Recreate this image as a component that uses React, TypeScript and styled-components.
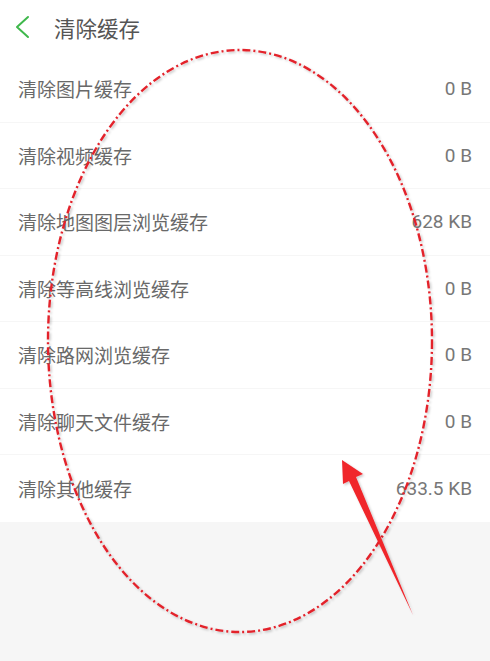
import React from 'react';
import styled, { createGlobalStyle } from 'styled-components';

const GlobalStyle = createGlobalStyle`
  html, body {
    margin: 0;
    padding: 0;
    background: #f6f6f6;
  }
  body {
    font-family: Roboto, "Noto Sans CJK SC", "Noto Sans", sans-serif;
  }
`;

interface CacheItem {
  label: string;
  size: string;
}

const items: CacheItem[] = [
  { label: '清除图片缓存', size: '0 B' },
  { label: '清除视频缓存', size: '0 B' },
  { label: '清除地图图层浏览缓存', size: '628 KB' },
  { label: '清除等高线浏览缓存', size: '0 B' },
  { label: '清除路网浏览缓存', size: '0 B' },
  { label: '清除聊天文件缓存', size: '0 B' },
  { label: '清除其他缓存', size: '633.5 KB' },
];

const App: React.FC = () => {
  return (
    <Page>
      <GlobalStyle />
      <Header>
        <BackButton aria-label="back">
          <svg width="18" height="28" viewBox="0 0 18 28">
            <polyline
              points="15,4 4,14 15,24"
              fill="none"
              stroke="#3fb84c"
              strokeWidth="2"
              strokeLinecap="round"
              strokeLinejoin="round"
            />
          </svg>
        </BackButton>
        <Title>清除缓存</Title>
      </Header>
      <List>
        {items.map((item, i) => (
          <Row key={item.label} $last={i === items.length - 1}>
            <Label>{item.label}</Label>
            <Size>{item.size}</Size>
          </Row>
        ))}
      </List>
      <Markup width="490" height="661" viewBox="0 0 490 661">
        <defs>
          <filter id="shadow" x="-20%" y="-20%" width="140%" height="140%">
            <feDropShadow dx="1.5" dy="1.5" stdDeviation="1.2" floodColor="#000" floodOpacity="0.22" />
          </filter>
        </defs>
        <ellipse
          cx="240"
          cy="341"
          rx="192"
          ry="291"
          fill="none"
          stroke="#e3232c"
          strokeWidth="2.4"
          strokeDasharray="8 3 2 3"
          filter="url(#shadow)"
        />
        <path
          d="M342 460 L363 474 L356 477 L413 615 L349 481 L343 484 Z"
          fill="#f0262c"
          filter="url(#shadow)"
        />
      </Markup>
    </Page>
  );
};

export default App;

const Page = styled.div`
  position: relative;
  width: 490px;
  height: 661px;
  overflow: hidden;
  background: #f6f6f6;
`;

const Header = styled.div`
  height: 56px;
  display: flex;
  align-items: center;
  padding: 0 0 0 13px;
  gap: 23px;
  background: #fff;
`;

const BackButton = styled.div`
  display: flex;
  align-items: center;
  margin-top: -2px;
`;

const Title = styled.div`
  font-size: 21.5px;
  color: #555;
  margin-top: -2px;
`;

const List = styled.div`
  display: flex;
  flex-direction: column;
  background: #fff;
`;

const Row = styled.div<{ $last?: boolean }>`
  height: 66.5px;
  box-sizing: border-box;
  display: flex;
  align-items: center;
  justify-content: space-between;
  padding: 0 18px;
  border-bottom: ${(p) => (p.$last ? 'none' : '1px solid #f6f6f6')};
`;

const Label = styled.span`
  font-size: 19px;
  color: #696969;
`;

const Size = styled.span`
  font-size: 19px;
  color: #777;
`;

const Markup = styled.svg`
  position: absolute;
  left: 0;
  top: 0;
  pointer-events: none;
`;
